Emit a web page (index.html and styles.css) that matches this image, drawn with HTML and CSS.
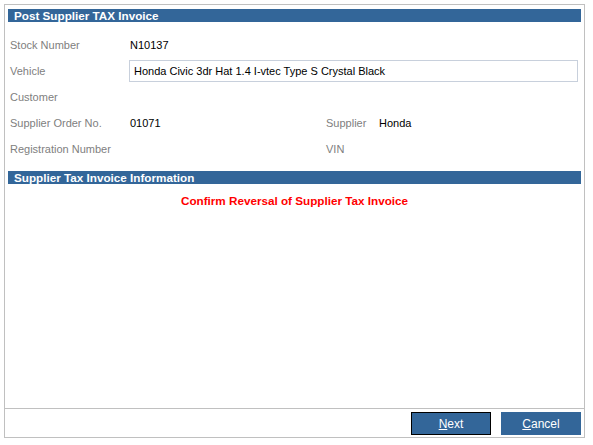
FILE: index.html
```html
<!DOCTYPE html>
<html lang="en">
<head>
  <meta charset="UTF-8">
  <title>Post Supplier TAX Invoice</title>
  <link rel="stylesheet" href="styles.css">
</head>
<body>
  <div class="dialog">
    <div class="content">
      <div class="section-title">Post Supplier TAX Invoice</div>

      <div class="form">
        <div class="row">
          <span class="label">Stock Number</span>
          <span class="value">N10137</span>
        </div>
        <div class="row">
          <span class="label">Vehicle</span>
          <input class="text-box" type="text" value="Honda Civic 3dr Hat 1.4 I-vtec Type S Crystal Black">
        </div>
        <div class="row">
          <span class="label">Customer</span>
          <span class="value"></span>
        </div>
        <div class="row">
          <span class="label">Supplier Order No.</span>
          <span class="value half">01071</span>
          <span class="label short">Supplier</span>
          <span class="value">Honda</span>
        </div>
        <div class="row">
          <span class="label">Registration Number</span>
          <span class="value half"></span>
          <span class="label short">VIN</span>
          <span class="value"></span>
        </div>
      </div>

      <div class="section-title">Supplier Tax Invoice Information</div>
      <div class="warning">Confirm Reversal of Supplier Tax Invoice</div>
    </div>

    <div class="footer">
      <button class="btn focused"><u>N</u>ext</button>
      <button class="btn"><u>C</u>ancel</button>
    </div>
  </div>
</body>
</html>
```

FILE: styles.css
```css
body {
  margin: 0;
  padding: 4px 8px 0 4px;
  font-family: 'Liberation Sans', Arial, sans-serif;
  font-size: 11px;
  background: #fff;
}
.dialog {
  height: 434px;
  border: 1px solid #c0c0c0;
  display: flex;
  flex-direction: column;
  box-sizing: border-box;
}
.content {
  flex: 1;
  padding: 4px 3px 0 3px;
}
.section-title {
  background-color: #336699;
  color: #fff;
  font-weight: bold;
  font-size: 11.7px;
  height: 13px;
  line-height: 13px;
  padding-left: 6px;
}
.form {
  padding: 10px 0 9px 2px;
}
.row {
  display: flex;
  align-items: center;
  height: 26px;
}
.label {
  width: 120px;
  color: #808080;
}
.label.short {
  width: 53px;
}
.value {
  color: #000;
}
.value.half {
  width: 196px;
}
.text-box {
  flex: 1;
  margin: 0 3px 0 -1px;
  height: 22px;
  box-sizing: border-box;
  border: 1px solid #c8d0dc;
  padding: 0 4px;
  font-family: inherit;
  font-size: 11px;
  color: #000;
}
.warning {
  text-align: center;
  color: #ff0000;
  font-weight: bold;
  font-size: 11.7px;
  margin-top: 10px;
}
.footer {
  border-top: 1px solid #c0c0c0;
  height: 28px;
  display: flex;
  justify-content: flex-end;
  align-items: flex-start;
  gap: 10px;
  padding-right: 3px;
}
.btn {
  width: 80px;
  height: 23px;
  background-color: #336699;
  color: #fff;
  border: 1px solid #336699;
  font-family: inherit;
  font-size: 12px;
  padding: 0;
  margin-top: 3px;
}
.btn.focused {
  border-color: #000;
}
```
